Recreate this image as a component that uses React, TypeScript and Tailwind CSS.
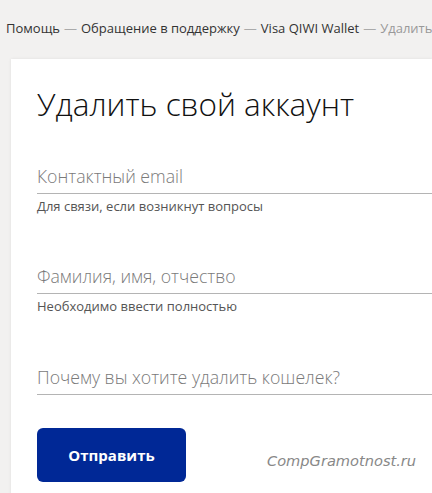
import React from "react";

function Field({ label, hint, gapTop }: { label: string; hint?: string; gapTop: string }) {
  return (
    <div className={gapTop}>
      <div className="border-b border-[#b4b4b4] pb-[6px] text-[17.7px] leading-[22px] text-[#7a7a7a]" style={{ fontFamily: '"Open Sans", sans-serif', fontWeight: 300 }}>
        {label}
      </div>
      {hint && (
        <div className="mt-[4px] text-[13px] leading-[16px] text-[#555]" style={{ fontFamily: '"Open Sans", sans-serif' }}>
          {hint}
        </div>
      )}
    </div>
  );
}

export default function App() {
  return (
    <div className="w-[432px] h-[493px] overflow-hidden bg-[#f2f1f0]" style={{ fontFamily: '"Open Sans", sans-serif' }}>
      <div className="pl-[6px] pt-[18px] h-[59px] whitespace-nowrap text-[13px] leading-[20px] text-[#333]">
        <span>Помощь</span>
        <span className="text-[#aaa] mx-[4px]">—</span>
        <span>Обращение в поддержку</span>
        <span className="text-[#aaa] mx-[4px]">—</span>
        <span>Visa QIWI Wallet</span>
        <span className="text-[#aaa] mx-[4px]">—</span>
        <span className="text-[#999]">Удалить</span>
      </div>
      <div className="ml-[11px] bg-white h-[440px] pl-[26px] pt-[23px] shadow-[0_0_3px_rgba(0,0,0,0.08)]">
        <h1 className="text-[31.5px] leading-[44px] text-[#111] whitespace-nowrap" style={{ fontWeight: 300 }}>
          Удалить свой аккаунт
        </h1>
        <Field gapTop="mt-[39px]" label="Контактный email" hint="Для связи, если возникнут вопросы" />
        <Field gapTop="mt-[51px]" label="Фамилия, имя, отчество" hint="Необходимо ввести полностью" />
        <Field gapTop="mt-[52px]" label="Почему вы хотите удалить кошелек?" />
        <div className="mt-[33px] flex items-center">
          <button className="w-[149px] h-[54px] rounded-[6px] bg-[#002896] text-white text-[15px] font-bold" style={{ fontFamily: '"Open Sans", sans-serif' }}>
            Отправить
          </button>
          <span className="ml-[81px] mt-[12px] italic text-[14.6px] text-[#888]" style={{ fontFamily: '"DejaVu Sans", Verdana, sans-serif' }}>
            CompGramotnost.ru
          </span>
        </div>
      </div>
    </div>
  );
}
